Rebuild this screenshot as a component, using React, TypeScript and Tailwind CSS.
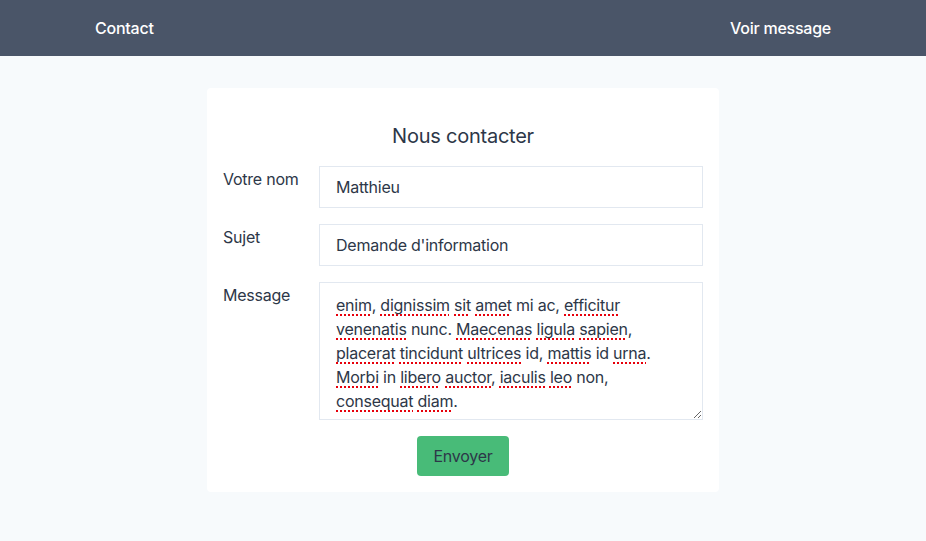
import React from "react"

const msg: [string, boolean][][] = [
  [["enim", true], [", ", false], ["dignissim", true], [" ", false], ["sit", true], [" ", false], ["amet", true], [" mi ac, ", false], ["efficitur", true]],
  [["venenatis", true], [" nunc. ", false], ["Maecenas", true], [" ", false], ["ligula", true], [" ", false], ["sapien", true], [",", false]],
  [["placerat", true], [" ", false], ["tincidunt", true], [" ", false], ["ultrices", true], [" id, ", false], ["mattis", true], [" id ", false], ["urna", true], [".", false]],
  [["Morbi", true], [" in ", false], ["libero", true], [" ", false], ["auctor", true], [", ", false], ["iaculis", true], [" ", false], ["leo", true], [" non,", false]],
  [["consequat", true], [" ", false], ["diam", true], [".", false]],
]

function Row({ label, children }: { label: string; children: React.ReactNode }) {
  return (
    <div className="flex mb-4">
      <label className="w-1/5 pt-px text-[#2d3748] leading-6">{label}</label>
      <div className="w-4/5">{children}</div>
    </div>
  )
}

export default function App() {
  return (
    <div className="min-h-[541px] bg-[#f7fafc] font-['Inter',sans-serif] text-base tracking-[-0.015em]">
      {/* Top bar */}
      <nav className="h-14 bg-[#4a5568] flex items-center justify-between px-[95px] text-white font-medium">
        <a href="#">Contact</a>
        <a href="#">Voir message</a>
      </nav>

      <div className="flex justify-center pt-8">
        <form className="w-[512px] bg-white rounded px-4 pt-[34px] pb-4">
          <h1 className="text-xl text-center text-[#2d3748] mb-4 leading-7">Nous contacter</h1>

          <Row label="Votre nom">
            <input
              className="w-full border border-[#e2e8f0] px-4 py-2 leading-6 text-[#2d3748] outline-none"
              defaultValue="Matthieu"
            />
          </Row>

          <Row label="Sujet">
            <input
              className="w-full border border-[#e2e8f0] px-4 py-2 leading-6 text-[#2d3748] outline-none"
              defaultValue="Demande d'information"
            />
          </Row>

          <Row label="Message">
            <div className="w-full h-[138px] border border-[#e2e8f0] px-4 pt-[10px] leading-6 text-[#2d3748] resize overflow-hidden">
              {msg.map((line, i) => (
                <div key={i}>
                  {line.map(([t, bad], j) =>
                    bad ? (
                      <span key={j} className="underline decoration-dotted decoration-red-600 decoration-2 underline-offset-[3px]">
                        {t}
                      </span>
                    ) : (
                      <span key={j}>{t.replace(/ /g, "\u00a0")}</span>
                    )
                  )}
                </div>
              ))}
            </div>
          </Row>

          <div className="flex justify-center">
            <button type="button" className="bg-[#48bb78] text-[#2d3748] px-4 py-2 leading-6 rounded">
              Envoyer
            </button>
          </div>
        </form>
      </div>
    </div>
  )
}
